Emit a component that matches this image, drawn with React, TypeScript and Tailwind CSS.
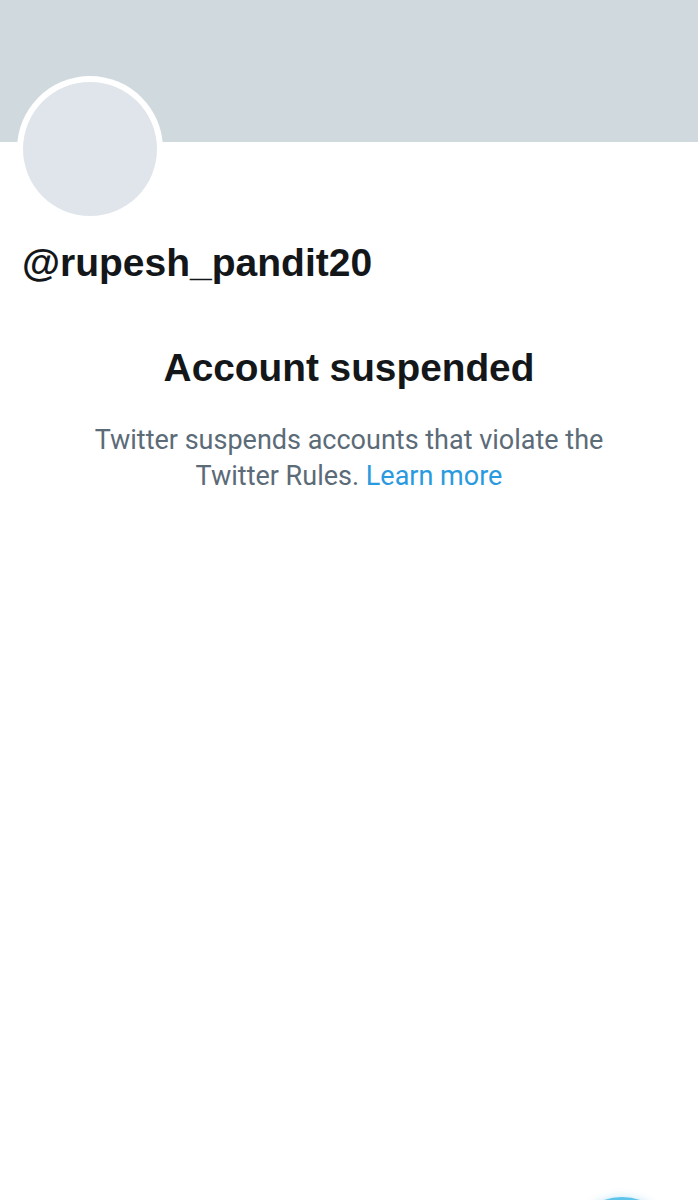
import React from "react";

export default function App() {
  return (
    <div className="relative h-[1200px] w-full overflow-hidden bg-white">
      <div className="h-[142px] bg-[#cfd9de]" />
      <div className="ml-[17px] -mt-[66px] flex h-[146px] w-[146px] items-center justify-center rounded-full bg-white">
        <div className="h-[134px] w-[134px] rounded-full bg-[#dfe5ea]" />
      </div>
      <div
        className="ml-[22px] mt-[18px] text-[39px] font-bold leading-[45px] text-[#14171a]"
        style={{ fontFamily: '"Liberation Sans", Arial, sans-serif' }}
      >
        @rupesh_pandit20
      </div>
      <div
        className="mt-[61px] text-center text-[38.8px] font-bold leading-[44px] text-[#14171a]"
        style={{ fontFamily: '"Liberation Sans", Arial, sans-serif' }}
      >
        Account suspended
      </div>
      <p
        className="mx-auto mt-[32px] w-[560px] text-center text-[27px] leading-[36px] text-[#5b6b78]"
        style={{ fontFamily: 'Roboto, "Noto Sans", sans-serif' }}
      >
        Twitter suspends accounts that violate the Twitter Rules.{" "}
        <span className="text-[#2a9ae0]">Learn more</span>
      </p>
      <div className="absolute left-[566px] top-[1197px] h-[112px] w-[112px] rounded-full bg-[#5cc3ea] shadow-[0_0_8px_rgba(29,161,242,0.25)]" />
    </div>
  );
}
